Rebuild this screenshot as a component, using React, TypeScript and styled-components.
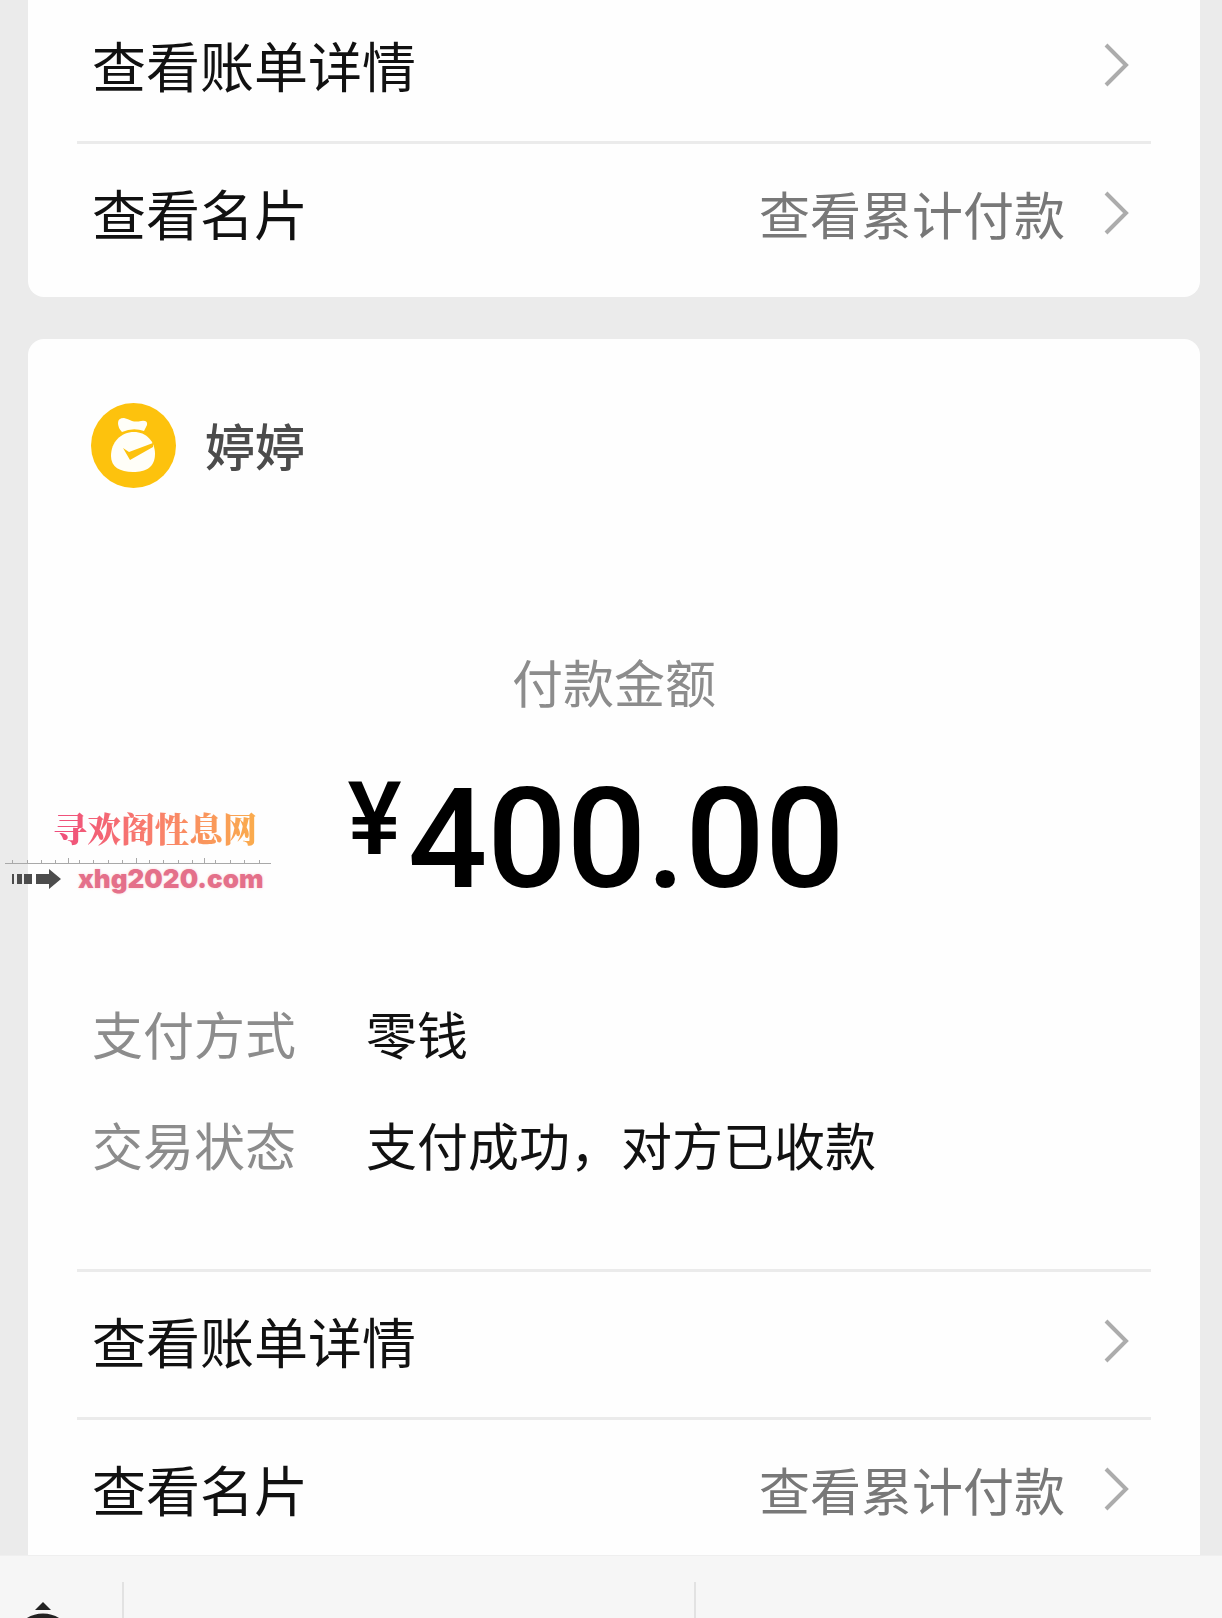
import React from "react";
import styled, { createGlobalStyle } from "styled-components";

const GlobalStyle = createGlobalStyle`
  * { box-sizing: border-box; }
  body {
    margin: 0;
    background: #ebebeb;
    font-family: "Noto Sans CJK SC", "Liberation Sans", sans-serif;
  }
`;

const Screen = styled.div`
  position: relative;
  display: flex;
  flex-direction: column;
  height: 100vh;
  overflow: hidden;
`;

const Feed = styled.main`
  flex: 1;
  min-height: 0;
  overflow: hidden;
  display: flex;
  flex-direction: column;
  gap: 42px;
  padding: 0 22px 0 28px;
`;

const Card = styled.article<{ $continued?: boolean }>`
  flex: none;
  background: #fefefe;
  border-radius: ${(p) => (p.$continued ? "0 0 16px 16px" : "16px")};
  margin-top: ${(p) => (p.$continued ? "-4px" : "0")};
  padding-bottom: 8px;
`;

const LinkList = styled.nav`
  margin: 0 49px;
`;

const LinkRow = styled.a<{ $divided?: boolean }>`
  display: flex;
  align-items: center;
  padding: 39px 22px 46px 15px;
  border-top: ${(p) => (p.$divided ? "3px solid #ebebeb" : "none")};
  color: #111;
  font-size: 54px;
  line-height: 60px;
  text-decoration: none;
`;

const RowNote = styled.span`
  margin-left: auto;
  color: #787878;
  font-size: 51px;
`;

const Chevron = styled.svg`
  flex: none;
  width: 26px;
  height: 46px;
  margin-left: 38px;
  fill: none;
  stroke: #acacac;
  stroke-width: 4;

  ${LinkRow} > span:only-of-type + & {
    margin-left: auto;
  }
`;

const Payee = styled.header`
  display: flex;
  align-items: center;
  gap: 29px;
  padding: 64px 63px 0;
`;

const Avatar = styled.svg`
  flex: none;
  width: 85px;
  height: 85px;
`;

const PayeeName = styled.h2`
  margin: 0;
  padding-bottom: 4px;
  color: #4c4c4c;
  font-size: 50px;
  font-weight: 500;
  line-height: 60px;
`;

const Payment = styled.section`
  display: flex;
  flex-direction: column;
  align-items: center;
  gap: 57px;
  margin-top: 163px;
`;

const Caption = styled.span`
  color: #8c8c8c;
  font-size: 51px;
  line-height: 60px;
`;

const Amount = styled.strong`
  display: flex;
  align-items: flex-start;
  gap: 6px;
  padding-right: 36px;
  color: #000;
  font-family: Roboto, "Liberation Sans", sans-serif;
  font-size: 140px;
  font-weight: 500;
  line-height: 142px;
`;

const Currency = styled.span`
  font-size: 102px;
  line-height: 102px;
`;

const Details = styled.dl`
  display: grid;
  grid-template-columns: auto 1fr;
  gap: 51px 70px;
  margin: 93px 64px 95px;
  font-size: 51px;
  line-height: 60px;
`;

const Term = styled.dt`
  color: #8c8c8c;
`;

const Value = styled.dd`
  margin: 0;
  color: #111;
`;

const MenuBar = styled.footer`
  flex: none;
  display: grid;
  grid-template-columns: 122px 13fr 12fr;
  height: 63px;
  overflow: hidden;
  background: #f6f6f6;
  border-top: 1px solid #efefef;
`;

const MenuButton = styled.button`
  margin: 26px 0 0;
  padding: 0;
  border: 0;
  border-left: 2px solid #e2e2e2;
  background: none;
`;

const KeyboardButton = styled.button`
  display: flex;
  align-items: flex-start;
  padding: 46px 0 0 12px;
  border: 0;
  background: none;
`;

const KeyboardIcon = styled.svg`
  flex: none;
  width: 62px;
  height: 70px;
`;

const Watermark = styled.aside`
  position: absolute;
  left: 5px;
  top: 805px;
  width: 268px;
`;

const SiteName = styled.div`
  width: fit-content;
  margin-left: 48px;
  background: linear-gradient(90deg, #ee4b7c, #f9806c 50%, #faac4c);
  background-clip: text;
  color: transparent;
  font-family: "Noto Serif CJK SC", "Noto Sans CJK SC", serif;
  font-size: 34px;
  font-weight: 900;
  line-height: 46px;
`;

const Ruler = styled.svg`
  display: block;
  width: 266px;
  height: 12px;
  margin-top: 2px;
  stroke: #a9a9a9;
`;

const SiteLine = styled.div`
  display: flex;
  align-items: center;
  gap: 16px;
  padding-left: 7px;
`;

const Arrow = styled.svg`
  flex: none;
  width: 50px;
  height: 22px;
  fill: #4c4c4c;
`;

const SiteUrl = styled.span`
  color: #e4708a;
  font-family: Inter, "Liberation Sans", sans-serif;
  font-size: 26px;
  font-weight: 900;
  line-height: 27px;
  text-shadow: 0 0 3px #fbd5d8;
`;

const ticks = [7, 22, 36, 50, 63, 74, 88, 103, 117, 131, 144, 158, 173, 187, 199, 210, 225, 239, 254];
const tallTicks = [63, 131, 199];

function RowChevron() {
  return (
    <Chevron viewBox="0 0 26 46" aria-hidden="true">
      <path d="M3 3 L23 23 L3 43" />
    </Chevron>
  );
}

function BillLinks({ divided }: { divided?: boolean }) {
  return (
    <LinkList>
      <LinkRow href="#bill" $divided={divided}>
        <span>查看账单详情</span>
        <RowChevron />
      </LinkRow>
      <LinkRow href="#contact" $divided>
        <span>查看名片</span>
        <RowNote>查看累计付款</RowNote>
        <RowChevron />
      </LinkRow>
    </LinkList>
  );
}

export default function App() {
  return (
    <Screen>
      <GlobalStyle />
      <Feed>
        <Card $continued>
          <BillLinks />
        </Card>
        <Card>
          <Payee>
            <Avatar viewBox="0 0 85 85" aria-hidden="true">
              <circle cx="42.5" cy="42.5" r="42.5" fill="#fdc20d" />
              <path
                d="M27 20 Q27 15 33 15 Q37 16 41 18 Q45 19 50 18 Q57 17 56 22 L53 28 Q42 24 31 29 Q27 25 27 20Z"
                fill="#fffef8"
              />
              <path
                d="M43 29 C55 29 64 38 64 51 C64 64 55 69 42 69 C29 69 20 64 20 53 C20 39 30 29 43 29Z"
                fill="#fffef8"
              />
              <path d="M32 45 L38 49 L62 40 L62 44 L39 57Z" fill="#fdc20d" />
            </Avatar>
            <PayeeName>婷婷</PayeeName>
          </Payee>
          <Payment>
            <Caption>付款金额</Caption>
            <Amount>
              <Currency>¥</Currency>
              <span>400.00</span>
            </Amount>
          </Payment>
          <Details>
            <Term>支付方式</Term>
            <Value>零钱</Value>
            <Term>交易状态</Term>
            <Value>支付成功，对方已收款</Value>
          </Details>
          <BillLinks divided />
        </Card>
      </Feed>
      <MenuBar>
        <KeyboardButton aria-label="键盘">
          <KeyboardIcon viewBox="0 0 62 70" aria-hidden="true">
            <path d="M31 0 L39 8 H23Z" fill="#222" />
            <circle cx="31" cy="42" r="28" fill="none" stroke="#222" strokeWidth="5" />
          </KeyboardIcon>
        </KeyboardButton>
        <MenuButton aria-label="菜单一" />
        <MenuButton aria-label="菜单二" />
      </MenuBar>
      <Watermark>
        <SiteName>寻欢阁性息网</SiteName>
        <Ruler viewBox="0 0 266 12" aria-hidden="true">
          <path d="M0 10.5 H266" />
          {ticks.map((x) => (
            <path key={x} d={`M${x + 0.5} 10 V${tallTicks.includes(x) ? 5 : 7}`} />
          ))}
        </Ruler>
        <SiteLine>
          <Arrow viewBox="0 0 50 22" aria-hidden="true">
            <path d="M0 6h2v10h-2z M5 6h5v10h-5z M12 6h8v10h-8z M24 6h13v-5l12 10l-12 10v-5h-13z" />
          </Arrow>
          <SiteUrl>xhg2020.com</SiteUrl>
        </SiteLine>
      </Watermark>
    </Screen>
  );
}
